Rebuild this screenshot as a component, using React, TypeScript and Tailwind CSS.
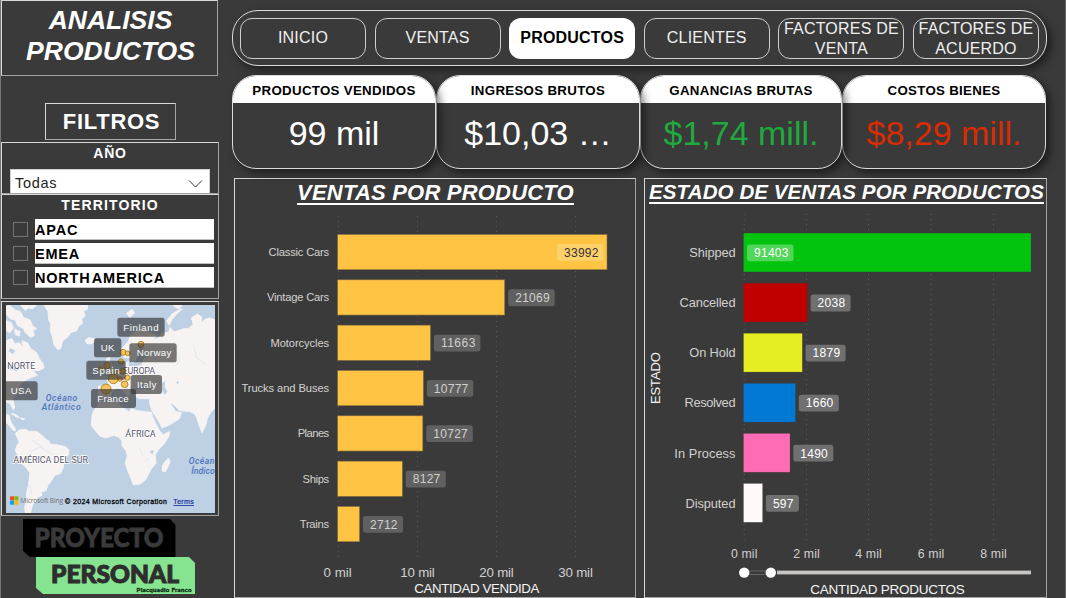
import type { ReactNode } from 'react';

const NAV = ['INICIO', 'VENTAS', 'PRODUCTOS', 'CLIENTES', 'FACTORES DE VENTA', 'FACTORES DE ACUERDO'];

const KPIS = [
  { title: 'PRODUCTOS VENDIDOS', value: '99 mil', box: 'w-[204px] z-40', color: 'text-white' },
  { title: 'INGRESOS BRUTOS', value: '$10,03 …', box: 'w-[204px] z-30', color: 'text-white' },
  { title: 'GANANCIAS BRUTAS', value: '$1,74 mill.', box: 'w-[202px] z-20', color: 'text-[#1faa3f]' },
  { title: 'COSTOS BIENES', value: '$8,29 mill.', box: 'w-[204px] z-10', color: 'text-[#d82c04]' },
];

const TERRITORIES = ['APAC', 'EMEA', 'NORTH AMERICA'];

type Bar = { name: string; x0: number; label: string; end: number; fill: string };

const PRODUCTS: Bar[] = [
  { name: 'Classic Cars', x0: 268.5, label: '33992', end: 607, fill: '#ffc444' },
  { name: 'Vintage Cars', x0: 267, label: '21069', end: 504.7, fill: '#ffc444' },
  { name: 'Motorcycles', x0: 270.5, label: '11663', end: 430.4, fill: '#ffc444' },
  { name: 'Trucks and Buses', x0: 241.5, label: '10777', end: 423.3, fill: '#ffc444' },
  { name: 'Planes', x0: 297.7, label: '10727', end: 422.8, fill: '#ffc444' },
  { name: 'Ships', x0: 302.5, label: '8127', end: 402.3, fill: '#ffc444' },
  { name: 'Trains', x0: 299.7, label: '2712', end: 359.5, fill: '#ffc444' },
];

const STATES: Bar[] = [
  { name: 'Shipped', x0: 689.3, label: '91403', end: 1031, fill: '#02c40f' },
  { name: 'Cancelled', x0: 679.5, label: '2038', end: 807.3, fill: '#c00000' },
  { name: 'On Hold', x0: 689.3, label: '1879', end: 802.3, fill: '#e6ee22' },
  { name: 'Resolved', x0: 684.5, label: '1660', end: 795.5, fill: '#0078d4' },
  { name: 'In Process', x0: 674.3, label: '1490', end: 790, fill: '#ff6cb5' },
  { name: 'Disputed', x0: 685.5, label: '597', end: 762.6, fill: '#fffafa' },
];

const PRODUCT_TICKS = [338.3, 417.5, 496.5, 575.6];
const STATE_TICKS = [744.2, 806.5, 868.5, 931, 993.5];

function Tag({ x, y, text, fill, color }: { x: number; y: number; text: string; fill: string; color: string }) {
  const w = text.length === 5 ? 46.5 : text.length === 4 ? 40 : 33;
  const tw = text.length * 7 - 0.5;
  return (
    <g>
      <rect x={x} y={y - 8.2} width={w} height={16.8} rx={2.5} fill={fill} />
      <text x={x + 7} y={y + 4.5} fontSize={12} textLength={tw} fill={color}>{text}</text>
    </g>
  );
}

function Grid({ ticks, y1, y2 }: { ticks: number[]; y1: number; y2: number }) {
  return (
    <>
      {ticks.map((t) => (
        <line key={t} x1={t} x2={t} y1={y1} y2={y2} stroke="#5c5c5c" strokeWidth={1} strokeDasharray="1 4" />
      ))}
    </>
  );
}

function ProductChart() {
  return (
    <svg className="block" width="400" height="388" viewBox="235 209 400 388" fontFamily="Liberation Sans, Arial, sans-serif">
      <Grid ticks={PRODUCT_TICKS} y1={216} y2={561} />
      {PRODUCTS.map((b, i) => {
        const y = 234.5 + i * 45.33;
        const inside = i === 0;
        return (
          <g key={b.name}>
            <text x={b.x0} y={y + 21.5} fontSize={11.2} textLength={329.2 - b.x0} fill="#d4d2d0">{b.name}</text>
            <rect x={337.7} y={y} width={b.end - 337.7} height={35.2} fill={b.fill} stroke="#85703c" strokeWidth={0.6} />
            <Tag
              x={inside ? 557 : b.end + 3.5}
              y={y + 17.7}
              text={b.label}
              fill={inside ? '#ffd16b' : '#606060'}
              color={inside ? '#333333' : '#d2d0ce'}
            />
          </g>
        );
      })}
      {['0 mil', '10 mil', '20 mil', '30 mil'].map((t, i) => (
        <text key={t} x={PRODUCT_TICKS[i] - (i ? 0 : 0.7)} y={577} fontSize={13.3} textAnchor="middle" textLength={i ? 34.5 : 28} fill="#d2d0ce">{t}</text>
      ))}
      <text x={414.3} y={593} fontSize={13.3} textLength={125} fill="#f5f5f5">CANTIDAD VENDIDA</text>
    </svg>
  );
}

function StateChart() {
  return (
    <svg className="block" width="401" height="389" viewBox="645 208 401 389" fontFamily="Liberation Sans, Arial, sans-serif">
      <Grid ticks={STATE_TICKS} y1={214} y2={544} />
      {STATES.map((b, i) => {
        const y = 233.1 + i * 50.08;
        const inside = i === 0;
        return (
          <g key={b.name}>
            <text x={b.x0} y={y + 24.1} fontSize={12.8} textLength={735.5 - b.x0} fill="#d2d0ce">{b.name}</text>
            <rect x={743.5} y={y} width={b.end - 743.5} height={38.8} fill={b.fill} stroke="#3a3a3a" strokeOpacity={0.35} strokeWidth={0.6} />
            <Tag
              x={inside ? 747 : b.end + 3.3}
              y={y + 19.6}
              text={b.label}
              fill={inside ? '#50d659' : '#707070'}
              color="#ffffff"
            />
          </g>
        );
      })}
      <text transform="translate(660.2 404) rotate(-90)" fontSize={13} textLength={52} fill="#f5f5f5">ESTADO</text>
      {['0 mil', '2 mil', '4 mil', '6 mil', '8 mil'].map((t, i) => (
        <text key={t} x={STATE_TICKS[i]} y={558} fontSize={12.3} textAnchor="middle" textLength={26.5} fill="#d2d0ce">{t}</text>
      ))}
      <rect x={748} y={571} width={20} height={3.6} fill="#3a3a3a" stroke="#777" strokeWidth={0.7} />
      <rect x={777} y={570.6} width={254} height={3.8} fill="#c8c6c4" />
      <circle cx={744.2} cy={572.6} r={5.2} fill="#fff" />
      <circle cx={770.8} cy={572.6} r={5.2} fill="#fff" />
      <text x={810.3} y={594} fontSize={13.5} textLength={154.5} fill="#f5f5f5">CANTIDAD PRODUCTOS</text>
    </svg>
  );
}

const LAND = [
  // Greenland
  'M132 21L144 40L146 66L153 78L150 96L158 118L162 140L172 154L182 152L188 128L203 118L212 104L230 98L236 84L248 76L245 64L256 52L250 40L262 34L262 21Z',
  // Canada and USA
  'M18 128L36 122L44 138L58 134L70 150L66 128L84 136L92 152L110 164L118 182L130 198L132 210L116 218L98 216L112 232L94 238L78 246L62 258L56 272L48 286L38 304L44 326L40 336L30 316L18 312Z',
  // Arctic islands
  'M18 26L28 22L46 36L62 42L70 58L90 66L98 84L110 92L98 98L104 112L92 118L76 104L70 92L52 82L46 66L30 62L18 48Z',
  'M18 68L34 74L40 90L30 104L18 98Z M44 94L60 100L58 114L46 110Z M62 21L110 21L98 32L84 30L76 38Z',
  // Central America and the Caribbean
  'M18 350L28 352L30 366L36 378L48 396L40 398L26 380L18 374Z M34 346L48 350L58 358L48 356Z M60 360L74 362L70 366Z',
  // South America
  'M46 406L58 396L78 394L86 400L108 400L124 410L138 424L148 430L150 438L170 440L196 446L207 456L204 472L192 488L190 508L182 526L164 532L156 546L144 562L138 578L124 582L126 592L112 598L108 608L98 620L94 634L92 645L76 645L74 626L80 608L80 584L86 558L90 526L78 508L64 496L56 476L46 458L50 444L58 432Z',
  // Africa
  'M300 308L320 314L352 308L358 322L376 334L388 342L394 332L412 338L440 342L454 342L458 356L468 378L480 400L490 410L510 400L506 416L492 438L476 454L466 470L468 496L454 512L446 528L436 546L420 558L400 561L394 544L384 520L376 496L382 474L378 458L366 444L366 428L356 418L342 412L316 420L300 414L286 398L274 382L276 356L280 340L292 324Z',
  // Madagascar
  'M506 480L510 492L502 510L496 522L487 519L487 504L494 492Z',
  // Iceland, Ireland, Great Britain
  'M256 126L266 119L282 122L286 130L272 138L260 136Z M302 206L312 202L312 216L300 218Z M320 180L330 178L328 190L336 204L342 216L338 222L320 222L326 210L320 198Z',
  // Europe and Asia
  'M296 296L296 264L326 264L322 244L340 236L356 224L370 214L376 196L386 190L384 204L398 208L426 202L432 182L446 178L430 168L432 150L420 142L410 160L410 182L398 196L388 180L372 178L362 166L366 150L384 132L392 112L414 96L434 94L446 104L470 112L460 126L478 118L486 104L506 104L510 88L522 102L552 92L566 92L580 78L574 60L592 48L604 56L604 76L614 64L630 60L645 66L645 330L632 344L622 360L618 380L606 404L598 384L590 358L582 346L566 340L540 338L516 316L512 318L526 340L544 344L538 362L514 378L486 390L474 366L458 342L450 320L448 302L418 302L404 294L402 280L418 274L456 276L450 260L432 254L420 264L406 272L398 284L386 280L376 262L372 268L390 284L384 298L366 272L352 270L336 280L330 296L310 304Z',
  // Barents and Kara islands
  'M508 82L500 68L516 48L536 36L548 32L530 48L516 64Z M520 21L546 21L538 32L526 28Z M380 46L396 34L404 44L390 58Z',
];

function MapTag({ x, y, w, tx, text, tw }: { x: number; y: number; w: number; tx: number; text: string; tw: number }) {
  return (
    <g>
      <rect x={x} y={y} width={w} height={57} rx={8} fill="#2f2f2f" fillOpacity={0.64} />
      <text x={tx} y={y + 39} fontSize={29} textLength={tw} fill="#fff">{text}</text>
    </g>
  );
}

const BUBBLES = [
  [423, 139, 9], [369, 163, 9], [383, 166, 7], [363, 191, 8], [321, 203, 10], [302, 211, 6],
  [349, 222, 6], [368, 220, 9], [340, 242, 15], [360, 243, 7], [382, 239, 8], [374, 259, 10], [318, 273, 15],
];

function WorldMap() {
  return (
    <svg className="block" width="209" height="208" viewBox="18 21 627 624" fontFamily="Liberation Sans, Arial, sans-serif">
      <rect x="18" y="21" width="627" height="624" fill="#bdd0e4" />
      {LAND.map((d) => (
        <path key={d} d={d} fill="#f6f3f2" stroke="#f6f3f2" strokeWidth={3} strokeLinejoin="round" />
      ))}
      <path d="M486 254L496 250L494 266L502 282L494 290L486 276Z M454 456L462 458L458 468L450 464Z M528 252L536 250L534 260Z" fill="#bdd0e4" />
      <path d="M18 206L40 204L58 212L50 220L30 214Z M30 150L46 158L38 168L26 160Z" fill="#bdd0e4" />
      <path d="M96 425L130 450M90 460L120 448L160 470M88 560L96 590M420 450L430 475M436 490L446 480M520 150L540 180L530 200M580 140L590 180L620 200" stroke="#dde5ee" strokeWidth={2.5} fill="none" />
      <g fill="#56556a" fontFamily="Roboto, Liberation Sans, sans-serif" fontSize={27} stroke="#ffffff" strokeWidth={4} paintOrder="stroke">
        <text x={22} y={213} textLength={84}>NORTE</text>
        <text x={368} y={227} textLength={97}>EUROPA</text>
        <text x={376} y={417} textLength={91}>ÁFRICA</text>
        <text x={40} y={496} textLength={224}>AMÉRICA DEL SUR</text>
      </g>
      <g fill="#4f73bd" fontFamily="Roboto, Liberation Sans, sans-serif" fontSize={26} fontStyle="italic" fontWeight={500}>
        <text x={137} y={309} textLength={95}>Océano</text>
        <text x={125} y={337} textLength={117}>Atlántico</text>
        <text x={566} y={499} textLength={77}>Océan</text>
        <text x={574} y={527} textLength={70}>Índico</text>
      </g>
      {BUBBLES.map(([x, y, r]) => (
        <circle key={`${x}-${y}`} cx={x} cy={y} r={r} fill="#f4b52d" fillOpacity={0.75} stroke="#a77a1c" strokeWidth={2.5} />
      ))}
      <MapTag x={352} y={59} w={142} tx={370} text="Finland" tw={106} />
      <MapTag x={282} y={121} w={82} tx={302} text="UK" tw={41} />
      <MapTag x={388} y={136} w={142} tx={410} text="Norway" tw={104} />
      <MapTag x={259} y={188} w={118} tx={277} text="Spain" tw={82} />
      <MapTag x={392} y={231} w={94} tx={411} text="Italy" tw={58} />
      <MapTag x={0} y={250} w={113} tx={32} text="USA" tw={62} />
      <MapTag x={273} y={273} w={135} tx={292} text="France" tw={94} />
      <rect x={30} y={595} width={12} height={12} fill="#f25022" />
      <rect x={43} y={595} width={12} height={12} fill="#7fba00" />
      <rect x={30} y={608} width={12} height={12} fill="#00a4ef" />
      <rect x={43} y={608} width={12} height={12} fill="#ffb900" />
      <text x={61} y={616} fontSize={20} textLength={128} fill="#737373" fontFamily="Open Sans, sans-serif">Microsoft Bing</text>
      <text x={195} y={618} fontSize={21} textLength={306} fill="#000" stroke="#000" strokeWidth={0.8}>© 2024 Microsoft Corporation</text>
      <text x={520} y={618} fontSize={21} textLength={61} fill="#12309a" stroke="#12309a" strokeWidth={0.6}>Terms</text>
      <rect x={520} y={621} width={62} height={2.5} fill="#12309a" />
    </svg>
  );
}

function Logo() {
  return (
    <svg className="block" width="173" height="76" viewBox="23 519 173 76" fontFamily="Lato, sans-serif" fontWeight={900}>
      <path d="M23 519H170L175.500 525V557H30L23 551Z" fill="#000" />
      <path d="M36 557H189L195 563V594H43L36 588Z" fill="#86e491" />
      <text x={34.500} y={546.500} fontSize={26.500} textLength={129} lengthAdjust="spacingAndGlyphs" fill="#3a3a3a" stroke="#3a3a3a" strokeWidth={0.8}>PROYECTO</text>
      <text x={51} y={582.800} fontSize={25.500} textLength={128} lengthAdjust="spacingAndGlyphs" fill="#2e2e2e" stroke="#2e2e2e" strokeWidth={1.1}>PERSONAL</text>
      <text x={136.500} y={592.300} fontSize={6.200} textLength={55} fill="#0c2a10" stroke="#0c2a10" strokeWidth={0.3}>Piacquadio Franco</text>
    </svg>
  );
}

function Frame({ className, children }: { className: string; children: ReactNode }) {
  return <section className={`border border-t-[#d8d8d8] border-l-[#d8d8d8] border-r-[#a5a5a5] border-b-[#a5a5a5] ${className}`}>{children}</section>;
}

export default function App() {
  return (
    <div className="flex h-[598px] w-[1066px] overflow-hidden border-l border-[#777] bg-[#3a3a3a] font-['Liberation_Sans',Arial,sans-serif] text-white">
      <aside className="flex w-[217px] shrink-0 flex-col">
        <Frame className="h-[76px] shrink-0 pt-[4px] text-center text-[26.500px] leading-[31px] font-bold italic">
          <h1 className="pl-0.5">ANALISIS<br />PRODUCTOS</h1>
        </Frame>
        <Frame className="mt-[27px] ml-[44px] flex h-[37px] w-[131px] shrink-0 items-center justify-center text-[22px] font-bold tracking-[0.7px]">
          <h2 className="pl-0.5">FILTROS</h2>
        </Frame>
        <Frame className="mt-[2px] flex h-[52px] w-[218px] shrink-0 flex-col overflow-hidden">
          <h3 className="h-[26px] shrink-0 text-center text-sm leading-[21px] font-bold tracking-[0.8px]">AÑO</h3>
          <div className="mx-2 flex h-[28px] w-[200px] shrink-0 items-center justify-between border border-[#d0d0d0] bg-white pt-px pr-1.5 pl-1 text-[14.500px] tracking-[0.7px] text-[#222]">
            Todas
            <svg width="15" height="9" viewBox="0 0 15 9" fill="none" stroke="#333" strokeWidth="1"><path d="M1 1.500L7.500 8L14 1.500" /></svg>
          </div>
        </Frame>
        <Frame className="flex h-[105px] w-[218px] shrink-0 flex-col">
          <h3 className="h-[23px] shrink-0 text-center text-sm leading-5 font-bold tracking-[1.15px]">TERRITORIO</h3>
          <ul className="flex flex-col gap-[3px] pt-px">
            {TERRITORIES.map((t) => (
              <li key={t} className="flex h-[21px] items-center pl-[11px]">
                <span className="mr-[7px] size-[15px] border border-[#757575]" />
                <span className="h-[21px] w-[179px] border-b border-[#c0c0c0] bg-white text-[14.500px] leading-[22px] font-bold tracking-[0.8px] text-black [word-spacing:-3px]">{t}</span>
              </li>
            ))}
          </ul>
        </Frame>
        <Frame className="mt-[2px] h-[215px] w-[218px] shrink-0 pt-[3px] pl-1">
          <WorldMap />
        </Frame>
        <div className="mt-[3px] pl-[22px]"><Logo /></div>
      </aside>

      <main className="ml-[14px] flex w-[815px] shrink-0 flex-col pt-[10px]">
        <nav className="flex h-[56px] shrink-0 items-center justify-between rounded-[26px] border border-[#dcdcdc] px-[7px] shadow-[4px_4px_9px_rgba(0,0,0,0.5)]">
          {NAV.map((n) => (
            <button
              key={n}
              className={
                n === 'PRODUCTOS'
                  ? 'h-[41px] w-[126px] rounded-xl bg-white text-base leading-5 font-bold tracking-[0.2px] text-black'
                  : 'h-[41px] w-[126px] rounded-xl border border-[#cfcfcf] text-base leading-5 tracking-[0.2px] text-[#f0f0f0]'
              }
            >
              {n}
            </button>
          ))}
        </nav>
        <div className="mt-[9px] flex h-[94px] shrink-0">
          {KPIS.map((k) => (
            <article key={k.title} className={`relative flex shrink-0 flex-col overflow-hidden rounded-[24px] border border-[#dcdcdc] bg-[#3a3a3a] text-center shadow-[4px_4px_9px_rgba(0,0,0,0.5)] ${k.box}`}>
              <h3 className="h-[27px] shrink-0 bg-white text-[13.300px] leading-[30px] font-bold tracking-[0.3px] whitespace-nowrap text-black">{k.title}</h3>
              <p className={`pt-[9px] text-[34px] leading-[42px] whitespace-nowrap ${k.color}`}>{k.value}</p>
            </article>
          ))}
        </div>
        <div className="mt-[9px] flex gap-2 pl-[2px]">
          <Frame className="h-[420px] w-[402px] shrink-0">
            <h2 className="h-[30px] pl-[1px] text-center text-[22px] leading-[27px] font-bold whitespace-nowrap italic underline decoration-2 underline-offset-[3px] tracking-[0.2px]">VENTAS POR PRODUCTO</h2>
            <ProductChart />
          </Frame>
          <Frame className="h-[420px] w-[403px] shrink-0">
            <h2 className="h-[29px] pl-[2px] text-center text-[20.500px] leading-[25px] font-bold whitespace-nowrap italic underline decoration-2 underline-offset-[3px] tracking-[0.1px]">ESTADO DE VENTAS POR PRODUCTOS</h2>
            <StateChart />
          </Frame>
        </div>
      </main>
      <div className="ml-auto w-px bg-[#666]" />
    </div>
  );
}
